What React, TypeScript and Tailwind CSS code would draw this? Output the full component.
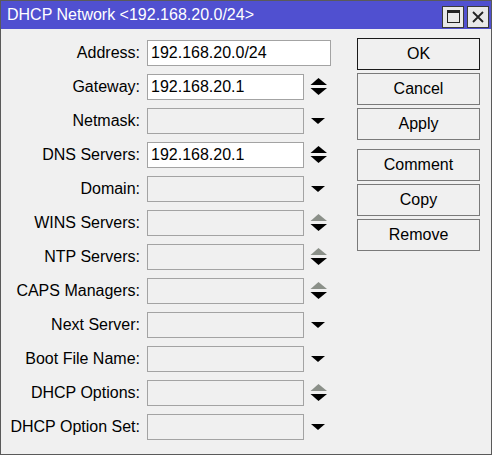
import React from 'react';

type Arrow = 'updown' | 'updown-gray' | 'down';

interface Field {
  label: string;
  value?: string;
  editable?: boolean;
  wide?: boolean;
  arrow?: Arrow;
}

const fields: Field[] = [
  { label: 'Address:', value: '192.168.20.0/24', editable: true, wide: true },
  { label: 'Gateway:', value: '192.168.20.1', editable: true, arrow: 'updown' },
  { label: 'Netmask:', arrow: 'down' },
  { label: 'DNS Servers:', value: '192.168.20.1', editable: true, arrow: 'updown' },
  { label: 'Domain:', arrow: 'down' },
  { label: 'WINS Servers:', arrow: 'updown-gray' },
  { label: 'NTP Servers:', arrow: 'updown-gray' },
  { label: 'CAPS Managers:', arrow: 'updown-gray' },
  { label: 'Next Server:', arrow: 'down' },
  { label: 'Boot File Name:', arrow: 'down' },
  { label: 'DHCP Options:', arrow: 'updown-gray' },
  { label: 'DHCP Option Set:', arrow: 'down' },
];

function ArrowIcon({ kind }: { kind: Arrow }) {
  if (kind === 'down') {
    return (
      <svg width="18" height="26" viewBox="0 0 18 26">
        <polygon points="1,10 15,10 8,16" fill="#000" />
      </svg>
    );
  }
  const upFill = kind === 'updown' ? '#000' : '#8b9089';
  return (
    <svg width="18" height="26" viewBox="0 0 18 26">
      <polygon points="8.5,4 17,11 0.5,11" fill={upFill} />
      <polygon points="0.5,14 17,14 8.5,21" fill="#000" />
    </svg>
  );
}

function Button({ label, primary }: { label: string; primary?: boolean }) {
  return (
    <div
      className={
        'h-[32px] w-[123px] flex items-center justify-center bg-[#f0f0f0] text-[16px] text-black border ' +
        (primary ? 'border-[#1a1a1a]' : 'border-[#7a7a7a]')
      }
    >
      {label}
    </div>
  );
}

export default function App() {
  return (
    <div
      className="w-[492px] h-[455px] bg-[#f0f0f0] border border-[#5a5a5a] flex flex-col"
      style={{ fontFamily: '"Liberation Sans", Arial, sans-serif' }}
    >
      <div className="h-[28px] bg-[#5050d0] flex items-center pl-[6px] pr-[2px] shrink-0">
        <span className="text-white text-[16px] flex-1 leading-none">DHCP Network &lt;192.168.20.0/24&gt;</span>
        <div className="flex gap-[3px] mt-[3px]">
          <div className="w-[22px] h-[22px] bg-[#e8e8e8] border border-[#3a3a3a] flex items-center justify-center">
            <div className="w-[13px] h-[13px] border border-[#222] border-t-[3px]" />
          </div>
          <div className="w-[22px] h-[22px] bg-[#e8e8e8] border border-[#3a3a3a] flex items-center justify-center">
            <svg width="12" height="12" viewBox="0 0 12 12">
              <path d="M1 1 L11 11 M11 1 L1 11" stroke="#222" strokeWidth="1.8" />
            </svg>
          </div>
        </div>
      </div>

      <div className="flex pt-[11px]">
        <div className="flex flex-col gap-[8px]">
          {fields.map((f) => (
            <div key={f.label} className="flex items-center h-[26px]">
              <div className="w-[139px] text-right text-[16px] text-black leading-none">{f.label}</div>
              <div
                className={
                  'ml-[7px] h-[26px] border border-[#a3a3a3] flex items-center pl-[3px] text-[16px] text-black leading-none ' +
                  (f.wide ? 'w-[184px] ' : 'w-[157px] ') +
                  (f.editable ? 'bg-white' : 'bg-[#f0f0f0]')
                }
              >
                {f.value}
              </div>
              {f.arrow && (
                <div className="ml-[6px] w-[18px] h-[26px]">
                  <ArrowIcon kind={f.arrow} />
                </div>
              )}
            </div>
          ))}
        </div>

        <div className="ml-auto mr-[11px] flex flex-col gap-[3px] -mt-[2px]">
          <Button label="OK" primary />
          <Button label="Cancel" />
          <Button label="Apply" />
          <div className="h-[3px]" />
          <Button label="Comment" />
          <Button label="Copy" />
          <Button label="Remove" />
        </div>
      </div>
    </div>
  );
}
